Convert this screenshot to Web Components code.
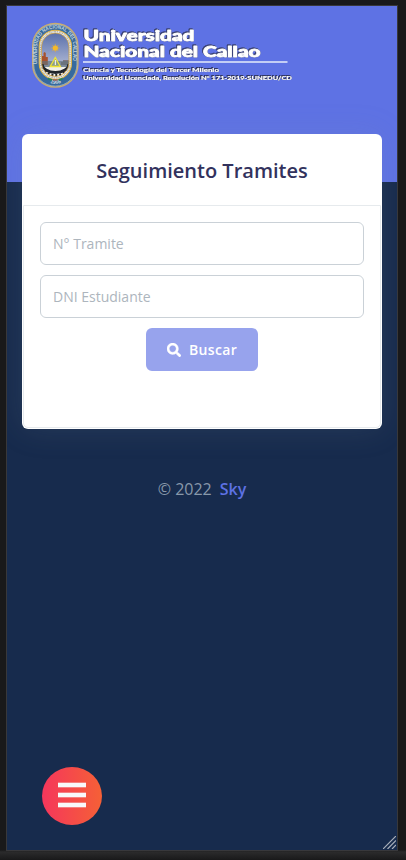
<!DOCTYPE html>
<html lang="es">
<head>
<meta charset="utf-8">
<title>Seguimiento Tramites</title>
<style>
html,body{margin:0;height:100%;background:#19191a;overflow:hidden}
body{font-family:"Open Sans",sans-serif}
</style>
</head>
<body>
<device-frame>
  <page-banner><unac-logo></unac-logo></page-banner>
  <track-card heading="Seguimiento Tramites">
    <text-field label="N° Tramite"></text-field>
    <text-field label="DNI Estudiante"></text-field>
    <search-button>Buscar</search-button>
  </track-card>
  <page-footer>© 2022 <b slot="brand">Sky</b></page-footer>
  <menu-fab></menu-fab>
  <resize-grip></resize-grip>
</device-frame>
<script>
function define(name, html) {
  customElements.define(name, class extends HTMLElement {
    constructor() {
      super();
      this.attachShadow({mode: 'open'}).innerHTML = html;
    }
    connectedCallback() {
      const t = this.shadowRoot.querySelector('[data-text]');
      if (t) t.textContent = this.getAttribute('heading');
      const i = this.shadowRoot.querySelector('input');
      if (i) i.placeholder = this.getAttribute('label');
    }
  });
}

define('device-frame', `
<style>
:host{display:block;box-sizing:border-box;height:860px;padding:5px 8px 9px 6px;background:linear-gradient(#19191a 0 850px,#2b2b2c 852px,#19191a 860px)}
.screen{position:relative;box-sizing:border-box;height:846px;border:1px solid #38383b;background:#172b4d;overflow:hidden;display:flex;flex-direction:column}
</style><div class="screen"><slot></slot></div>`);

define('page-banner', `
<style>:host{display:block;box-sizing:border-box;flex:none;height:176px;padding:16px 0 0 24px;background:#5e72e4}</style><slot></slot>`);

define('unac-logo', `
<style>
:host{display:block}
svg{display:block}
.name text{font-family:"Lato","Open Sans",sans-serif;font-weight:900;fill:#fff;stroke:#fff;stroke-linejoin:round}
.big{filter:drop-shadow(.7px .7px .3px #30355f) drop-shadow(-.5px -.3px .2px #3c4478)}
.small{filter:drop-shadow(.5px .5px .2px #30355f) drop-shadow(-.4px -.4px .2px #30355f)}
.ring{font-family:"Liberation Sans",sans-serif;font-weight:700;font-size:5.2px;fill:#c3d3dd}
</style>
<svg width="268" height="68" viewBox="31 22 268 68">
  <defs>
    <linearGradient id="sky" x1="0" y1="0" x2="0" y2="1"><stop offset="0" stop-color="#586eaa"/><stop offset=".65" stop-color="#a4afd0"/><stop offset="1" stop-color="#d5d8df"/></linearGradient>
    <clipPath id="in"><rect x="41.5" y="33" width="27.5" height="43.5" rx="13.7"/></clipPath>
    <path id="arc" d="M37.3 64V46.5a18 18 0 0 1 36 0V64"/>
    <path id="low" d="M45.5 80.5Q55.3 87.5 65 80.5"/>
  </defs>
  <rect x="32.7" y="23.5" width="45.2" height="63.6" rx="22.6" fill="#366a9e" stroke="#c9ad70" stroke-width="1.4"/>
  <rect x="33.7" y="24.5" width="43.2" height="61.6" rx="21.6" fill="none" stroke="#e4e2d4" stroke-width=".5"/>
  <text class="ring" textLength="88" lengthAdjust="spacingAndGlyphs"><textPath href="#arc">UNIVERSIDAD NACIONAL DEL CALLAO</textPath></text>
  <text class="ring"><textPath href="#low" startOffset="5">1966</textPath></text>
  <rect x="39.2" y="30.2" width="32.3" height="49.1" rx="16.1" fill="#f2f2ee" stroke="#dfb347" stroke-width="1.1"/>
  <rect x="40.7" y="31.7" width="29.3" height="46.2" rx="14.6" fill="none" stroke="#8b8b86" stroke-width="1" stroke-dasharray="1 .8"/>
  <g clip-path="url(#in)">
    <rect x="41" y="32" width="29" height="46" fill="url(#sky)"/>
    <path d="M42 65v-9h1.5v-3l1-1 1.3 1v4h2v8z" fill="#a7522f"/>
    <path d="M61 65v-3h2v-2h6v5z" fill="#7e7780"/>
    <path d="M41 61h29v6H41z" fill="#60717b" opacity=".65"/>
    <path d="M41 67h29v12H41z" fill="#f3f1e9"/>
    <path d="M42 64a13.4 8.500 0 0 0 27 0" fill="none" stroke="#20252b" stroke-width="3"/>
    <path d="M43 67.500a12.500 8 0 0 0 25 0" fill="none" stroke="#20252b" stroke-width="3" stroke-dasharray="2 2"/>
  </g>
  <rect x="41.5" y="33" width="27.5" height="43.5" rx="13.7" fill="none" stroke="#d3a544" stroke-width=".8"/>
  <path d="M55.3 43.8v8.4M51.1 48h8.4M52.3 45l6 6M52.3 51l6-6" stroke="#e2aa39" stroke-width=".7"/>
  <circle cx="55.3" cy="48" r="2.6" fill="#f5b929"/>
  <path d="M55.3 57.500l5 9H50.2z" fill="#8f9f84" stroke="#f0e537" stroke-width="1.3"/>
  <path d="M54.8 60h1.2v5h-1.2z" fill="#eee"/>
  <path d="M48 78.7l4 1.5M62.7 78.7l-4 1.5" stroke="#298258" stroke-width="1.8"/>
  <path d="M53 80h4.5" stroke="#a54432" stroke-width="1"/>
  <g class="name">
    <g class="big" stroke-width=".8">
      <text x="83.500" y="41.200" font-size="14.500" textLength="111" lengthAdjust="spacingAndGlyphs">Universidad</text>
      <text x="83.500" y="56.600" font-size="14.500" textLength="177" lengthAdjust="spacingAndGlyphs">Nacional del Callao</text>
    </g>
    <path d="M83 62h204.500" stroke="#c3cdf5" stroke-width="2"/>
    <g class="small" stroke-width=".15">
      <text x="83" y="72" font-size="6" textLength="136" lengthAdjust="spacingAndGlyphs">Ciencia y Tecnología del Tercer Milenio</text>
      <text x="83" y="80" font-size="6" textLength="209" lengthAdjust="spacingAndGlyphs">Universidad Licenciada, Resolución N° 171-2019-SUNEDU/CD</text>
    </g>
  </g>
</svg>`);

define('track-card', `
<style>
:host{display:flex;flex-direction:column;flex:none;box-sizing:border-box;height:295px;margin:-48px 15px 0;background:#fff;border-radius:6px;box-shadow:0 0 32px rgba(136,152,170,.15);overflow:hidden;position:relative}
header{flex:none;height:71px;display:flex;align-items:center;justify-content:center;padding-top:2px;box-sizing:border-box}
h1{margin:0;font-size:20px;line-height:30px;font-weight:600;color:#32325d}
.body{flex:1;display:flex;flex-direction:column;align-items:center;gap:10px;border:1px solid #e6eaed;margin:0 1px 1px;padding:16px 16px 0;border-radius:0 0 5px 5px}
</style><header><h1 data-text></h1></header><div class="body"><slot></slot></div>`);

define('text-field', `
<style>
:host{display:block;align-self:stretch;height:43px}
input{display:block;box-sizing:border-box;width:100%;height:43px;border:1px solid #cad1d7;border-radius:6px;padding:0 12px;background:#fff;font:400 14px "Open Sans",sans-serif;outline:0}
input::placeholder{color:#adb5bd;opacity:1}
</style><input>`);

define('search-button', `
<style>
:host{display:block}
button{display:flex;align-items:center;justify-content:center;gap:8px;width:112px;height:43px;padding:0;border:0;border-radius:6px;background:#97a3ed;color:#fff;font:600 14px "Open Sans",sans-serif;letter-spacing:.35px}
</style><button><svg width="14" height="14" viewBox="0 0 512 512"><path fill="#fff" stroke="#fff" stroke-width="16" d="M505 442.700 405.300 343c-4.500-4.500-10.600-7-17-7H372c27.600-35.300 44-79.700 44-128C416 93.100 322.900 0 208 0S0 93.100 0 208s93.100 208 208 208c48.300 0 92.700-16.400 128-44v16.300c0 6.400 2.500 12.500 7 17l99.700 99.700c9.400 9.400 24.600 9.400 33.900 0l28.300-28.300c9.400-9.400 9.400-24.600.1-34zM208 336c-70.700 0-128-57.200-128-128 0-70.700 57.200-128 128-128 70.700 0 128 57.200 128 128 0 70.700-57.200 128-128 128z"/></svg><span><slot></slot></span></button>`);

define('page-footer', `
<style>
:host{display:flex;justify-content:center;gap:8px;margin-top:48px;font-size:16px;line-height:24px;color:#8898aa}
::slotted(b){font-weight:600;color:#5e72e4}
</style><span><slot></slot></span><slot name="brand"></slot>`);

define('menu-fab', `
<style>
:host{position:absolute;left:35px;top:761px}
button{display:flex;flex-direction:column;align-items:center;justify-content:center;gap:6px;width:60px;height:58px;padding:0 0 2px;border:0;border-radius:50%;background:linear-gradient(90deg,#f5365c,#f56036)}
i{width:28px;height:4px;background:#f8f9fa;box-shadow:0 -.5px #f8b5b5,0 .5px #f8b5b5}
</style><button aria-label="Menu"><i></i><i></i><i></i></button>`);

define('resize-grip', `
<style>:host{position:absolute;right:1px;bottom:1px}svg{display:block}</style>
<svg width="13" height="13" viewBox="0 0 13 13"><path d="M0 13 13 0M4.500 13 13 4.500M9 13l4-4" stroke="#a9b0ba" stroke-width="1.200"/></svg>`);
</script>
</body>
</html>
